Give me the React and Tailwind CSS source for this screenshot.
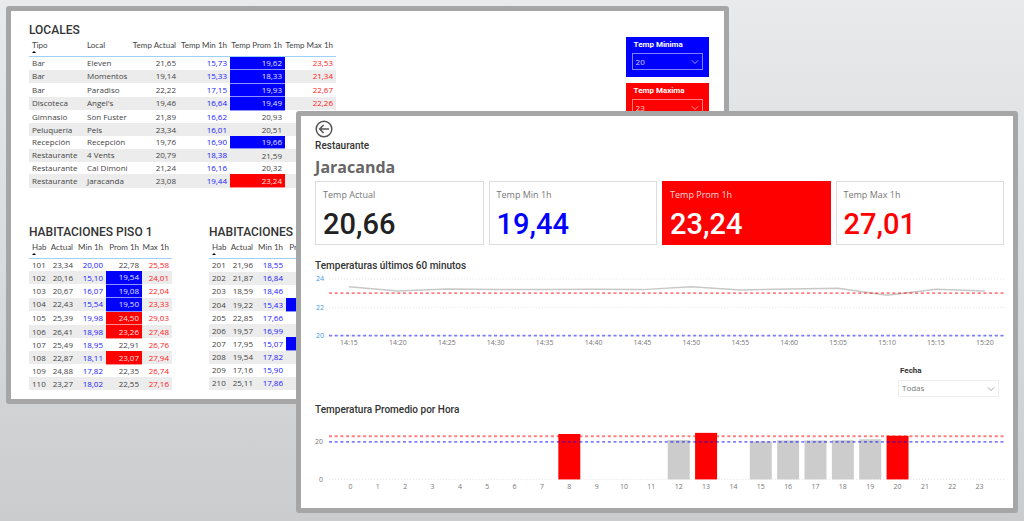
import { ChevronDown } from 'lucide-react'

const MIN = 20
const MAX = 23

const locales = [
  ['Bar', 'Eleven', '21,65', '15,73', '19,62', '23,53'],
  ['Bar', 'Momentos', '19,14', '15,33', '18,33', '21,34'],
  ['Bar', 'Paradiso', '22,22', '17,15', '19,93', '22,67'],
  ['Discoteca', "Angel's", '19,46', '16,64', '19,49', '22,26'],
  ['Gimnasio', 'Son Fuster', '21,89', '16,62', '20,93', ''],
  ['Peluquería', 'Pels', '23,34', '16,01', '20,51', ''],
  ['Recepción', 'Recepción', '19,76', '16,90', '19,66', ''],
  ['Restaurante', '4 Vents', '20,79', '18,38', '21,59', ''],
  ['Restaurante', 'Cal Dimoni', '21,24', '16,16', '20,32', ''],
  ['Restaurante', 'Jaracanda', '23,08', '19,44', '23,24', ''],
]

const piso1 = [
  ['101', '23,34', '20,00', '22,78', '25,58'],
  ['102', '20,16', '15,10', '19,54', '24,01'],
  ['103', '20,67', '16,07', '19,08', '22,04'],
  ['104', '22,43', '15,54', '19,50', '23,33'],
  ['105', '25,39', '19,98', '24,50', '29,03'],
  ['106', '26,41', '18,98', '23,26', '27,48'],
  ['107', '25,49', '18,95', '22,91', '26,76'],
  ['108', '22,87', '18,11', '23,07', '27,94'],
  ['109', '24,88', '17,82', '22,35', '26,74'],
  ['110', '23,27', '18,02', '22,55', '27,16'],
]

const piso2 = [
  ['201', '21,96', '18,55', '', ''],
  ['202', '21,87', '16,84', '', ''],
  ['203', '18,59', '18,46', '', ''],
  ['204', '19,22', '15,43', '', '', 'low'],
  ['205', '22,85', '17,66', '', ''],
  ['206', '19,57', '16,99', '', ''],
  ['207', '17,95', '15,07', '', '', 'low'],
  ['208', '19,54', '17,82', '', ''],
  ['209', '17,16', '15,90', '', ''],
  ['210', '25,11', '17,86', '', ''],
]

const localCols = [
  { label: 'Tipo', width: 'w-[55px]', kind: 'text' },
  { label: 'Local', width: 'w-[47px]', kind: 'text' },
  { label: 'Temp Actual', width: 'w-[48px]', kind: 'num' },
  { label: 'Temp Min 1h', width: 'w-[51px]', kind: 'min' },
  { label: 'Temp Prom 1h', width: 'w-[55px]', kind: 'prom' },
  { label: 'Temp Max 1h', width: 'w-[51px]', kind: 'max' },
]

const roomCols = [
  { label: 'Hab', width: 'w-[19px]', kind: 'text' },
  { label: 'Actual', width: 'w-[28px]', kind: 'num' },
  { label: 'Min 1h', width: 'w-[30px]', kind: 'min' },
  { label: 'Prom 1h', width: 'w-[36px]', kind: 'prom' },
  { label: 'Max 1h', width: 'w-[30px]', kind: 'max' },
]

const minutes = [
  ['14:15', 23.45], ['14:20', 23.15], ['14:25', 23.3], ['14:30', 23.25], ['14:35', 23.25],
  ['14:40', 23.28], ['14:45', 23.25], ['14:50', 23.45], ['14:55', 23.22], ['14:60', 23.3],
  ['15:05', 23.35], ['15:10', 22.85], ['15:15', 23.27], ['15:20', 23.16],
]

const hours = { 8: 24.2, 12: 21, 13: 24.8, 15: 20.2, 16: 20.8, 17: 20.8, 18: 20.9, 19: 21.4, 20: 23.24 }

const cards = [
  { label: 'Temp Actual', value: '20,66', box: 'border-[#dcdcdc] bg-white', text: 'text-[#777]', num: 'text-[#222]' },
  { label: 'Temp Min 1h', value: '19,44', box: 'border-[#dcdcdc] bg-white', text: 'text-[#777]', num: 'text-[#0000ff]' },
  { label: 'Temp Prom 1h', value: '23,24', box: 'border-[#ff0000] bg-[#ff0000]', text: 'text-[#ffd9d9]', num: 'text-white' },
  { label: 'Temp Max 1h', value: '27,01', box: 'border-[#dcdcdc] bg-white', text: 'text-[#777]', num: 'text-[#ff0000]' },
]

const kinds = {
  text: 'text-left text-[#444]',
  num: 'text-right text-[#444]',
  min: 'text-right text-[#2020ff]',
  prom: 'text-right text-[#444]',
  max: 'text-right text-[#ff2020]',
}

const levels = {
  low: 'text-right text-[#e0e0ff] bg-[#0000ff] border-b border-[#9090ff]',
  high: 'text-right text-[#ffe0e0] bg-[#ff0000] border-b border-[#ff9090]',
}

function levelOf(value) {
  if (!value) return null
  const n = parseFloat(value.replace(',', '.'))
  if (n < MIN) return 'low'
  return n > MAX ? 'high' : null
}

function DataTable({ cols, rows, caption, width }) {
  return (
    <table className={`h-[150px] table-fixed border-collapse text-[8px] leading-3 whitespace-nowrap ${width}`}>
      <caption className="text-left font-[Roboto,sans-serif] text-[12px] leading-4 font-medium text-[#333]">{caption}</caption>
      <thead>
        <tr className="h-[18px] border-b border-[#9fd0f5]">
          {cols.map((c, i) => (
            <th key={c.label} className={`${c.width} px-[3px] align-top pt-px font-[Lato,sans-serif] font-normal text-[#444] ${c.kind === 'text' ? 'text-left' : 'text-right'}`}>
              <span className={c.kind === 'text' ? 'block' : 'flex justify-end'}>{c.label}</span>
              {i === 0 && <span className="block w-0 border-x-2 border-b-2 border-x-transparent border-b-black" />}
            </th>
          ))}
        </tr>
      </thead>
      <tbody>
        {rows.map((row) => (
          <tr key={row.join()} className="even:bg-[#ececec]">
            {cols.map((c, i) => {
              const level = c.kind === 'prom' ? row[5] && cols.length === 5 ? row[5] : levelOf(row[i]) : null
              return <td key={c.label} className={`px-[3px] ${level ? levels[level] : kinds[c.kind]}`}>{row[i]}</td>
            })}
          </tr>
        ))}
      </tbody>
    </table>
  )
}

function Dropdown({ id, value, className, icon }) {
  return (
    <div className="relative">
      <select id={id} defaultValue={value} className={`block h-[17px] w-full appearance-none border pl-[3px] text-[8px] leading-3 ${className}`}>
        <option className="text-black">{value}</option>
      </select>
      <ChevronDown strokeWidth={1.5} className={`pointer-events-none absolute top-[3px] right-0.5 size-3 ${icon}`} />
    </div>
  )
}

function Slicer({ id, label, value, color }) {
  return (
    <div className={`h-10 w-[83px] px-1.5 pt-0.5 ${color}`}>
      <label htmlFor={id} className="block pb-0.5 pl-0.5 font-[Roboto,sans-serif] text-[8px] leading-3 font-bold text-white">{label}</label>
      <Dropdown id={id} value={value} className="border-white/50 text-white/80" icon="text-white/80" />
    </div>
  )
}

function Limit({ y, color }) {
  return <line x1="14" x2="690" y1={y} y2={y} stroke={color} strokeWidth="1.8" strokeDasharray="3 2.7" opacity="0.5" />
}

function Grid({ y }) {
  return <line x1="14" x2="690" y1={y} y2={y} stroke="#dcdcdc" strokeWidth="0.8" strokeDasharray="1 2" />
}

function MinutesChart() {
  const x = (i) => 34 + i * 49
  const y = (v) => 5 + (24 - v) * 14.2
  const points = minutes.map(([, v], i) => `${x(i)},${y(v)}`).join(' ')
  return (
    <svg viewBox="0 0 690 74" className="block w-full text-[7px]">
      {[24, 22, 20].map((v) => (
        <g key={v}>
          <Grid y={y(v)} />
          <text x="1" y={y(v) + 2.5} fill="#3a9be8">{v}</text>
        </g>
      ))}
      <polyline points={points} fill="none" stroke="#c8c8c8" strokeWidth="1.5" />
      <Limit y={y(MAX)} color="#ff0000" />
      <Limit y={y(MIN)} color="#0000ff" />
      {minutes.map(([t], i) => (
        <text key={t} x={x(i)} y="71" textAnchor="middle" fill="#777">{t}</text>
      ))}
    </svg>
  )
}

function HoursChart() {
  const x = (h) => 35.5 + h * 27.4
  const y = (v) => 54.5 - v * 1.88
  return (
    <svg viewBox="0 0 690 66" className="block w-full text-[7px]">
      {[20, 0].map((v) => (
        <text key={v} x="8" y={y(v) + 2.5} textAnchor="end" fill="#777">{v}</text>
      ))}
      <Grid y={y(0)} />
      {Object.entries(hours).map(([h, v]) => (
        <rect key={h} x={x(h) - 11} y={y(v)} width="22" height={v * 1.88} fill={v > MAX ? '#ff0000' : '#cccccc'} />
      ))}
      <Limit y={y(MAX)} color="#ff0000" />
      <Limit y={y(MIN)} color="#0000ff" />
      {Array.from({ length: 24 }, (_, h) => (
        <text key={h} x={x(h)} y="64" textAnchor="middle" fill="#777">{h}</text>
      ))}
    </svg>
  )
}

function Overview() {
  return (
    <section className="w-[71.4%] overflow-hidden rounded-[3px] border-[5px] border-[#a6a6a6] bg-white pt-[11px] pr-[15px] pb-[9px] pl-[18px]">
      <div className="flex items-start justify-between">
        <DataTable cols={localCols} rows={locales} caption="LOCALES" width="w-[307px]" />
        <div className="mt-[15px] flex flex-col gap-1.5">
          <Slicer id="temp-min" label="Temp Minima" value="20" color="bg-[#0000ff]" />
          <Slicer id="temp-max" label="Temp Maxima" value="23" color="bg-[#ff0000]" />
        </div>
      </div>
      <div className="mt-9 flex gap-[37px]">
        <DataTable cols={roomCols} rows={piso1} caption="HABITACIONES PISO 1" width="w-[143px]" />
        <DataTable cols={roomCols} rows={piso2} caption="HABITACIONES PISO 2" width="w-[143px]" />
      </div>
    </section>
  )
}

function Detail() {
  return (
    <section className="absolute top-[111px] right-1.5 w-[70.5%] rounded-[3px] border-[5px] border-[#a6a6a6] bg-white pt-1 pr-[9px] pb-[17px] pl-[14px]">
      <button aria-label="Volver" className="block text-[#555]">
        <svg viewBox="0 0 18 18" className="size-[18px]" fill="none" stroke="currentColor" strokeWidth="1.5">
          <circle cx="9" cy="9" r="7.8" />
          <path d="M14 9H5M8.6 5L4.6 9l4 4" />
        </svg>
      </button>
      <p className="font-[Roboto,sans-serif] text-[10px] leading-4 font-medium text-[#333]">Restaurante</p>
      <h1 className="pt-[3px] pb-1 text-base leading-5 font-bold text-[#666]">Jaracanda</h1>
      <div className="grid grid-cols-4 gap-[5px]">
        {cards.map((c) => (
          <div key={c.label} className={`h-16 border px-[7px] pt-[7px] ${c.box}`}>
            <p className={`text-[9px] leading-3 ${c.text}`}>{c.label}</p>
            <p className={`pt-[7px] font-[Roboto,sans-serif] text-[29px] leading-8 font-medium ${c.num}`}>{c.value}</p>
          </div>
        ))}
      </div>
      <h2 className="pt-[15px] font-[Roboto,sans-serif] text-[10px] leading-3 font-medium text-[#333]">Temperaturas últimos 60 minutos</h2>
      <div className="pt-0.5">
        <MinutesChart />
      </div>
      <div className="mt-[17px] mr-[5px] ml-auto w-[101px]">
        <label htmlFor="fecha" className="block pb-[3px] pl-0.5 font-[Roboto,sans-serif] text-[8px] leading-3 font-bold text-[#333]">Fecha</label>
        <Dropdown id="fecha" value="Todas" className="border-[#eee] bg-white text-[#777]" icon="text-[#888]" />
      </div>
      <h2 className="pt-[7px] font-[Roboto,sans-serif] text-[10px] leading-3 font-medium text-[#333]">Temperatura Promedio por Hora</h2>
      <div className="pt-[9px]">
        <HoursChart />
      </div>
    </section>
  )
}

export default function App() {
  return (
    <main className="relative min-h-screen bg-linear-to-b from-[#e9eaeb] to-[#cbccce] p-1.5 font-['Open_Sans',sans-serif]">
      <Overview />
      <Detail />
    </main>
  )
}
